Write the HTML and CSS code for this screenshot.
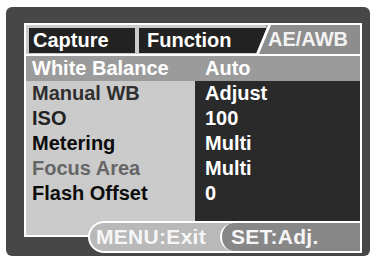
FILE: index.html
```html
<!DOCTYPE html>
<html>
<head>
<meta charset="utf-8">
<link rel="stylesheet" href="styles.css">
</head>
<body>
<div class="screen">
  <div class="panel">
    <div class="top">
      <div class="tabs">
        <div class="tab tab-capture">Capture</div>
        <div class="tab tab-function">Function</div>
        <div class="tab tab-active"><span class="tab-text">AE/AWB</span></div>
      </div>
      <div class="row-hl">
        <div class="hl-label">White Balance</div>
        <div class="hl-value">Auto</div>
      </div>
      <div class="grid">
        <div class="labels">
          <div class="item c-dim">Manual WB</div>
          <div class="item c-dark">ISO</div>
          <div class="item c-black">Metering</div>
          <div class="item c-gray">Focus Area</div>
          <div class="item c-black">Flash Offset</div>
        </div>
        <div class="values">
          <div class="item">Adjust</div>
          <div class="item">100</div>
          <div class="item">Multi</div>
          <div class="item">Multi</div>
          <div class="item">0</div>
        </div>
      </div>
    </div>
    <div class="foot">
      <div class="foot-left"></div>
      <div class="bar">
        <div class="menu">MENU:Exit</div>
        <div class="set">SET:Adj.</div>
      </div>
    </div>
  </div>
</div>
</body>
</html>
```
FILE: styles.css
```css
* { box-sizing: border-box; }
html, body { margin: 0; padding: 0; background: #ffffff; }
body {
  width: 376px;
  height: 262px;
  overflow: hidden;
  font-family: "Liberation Sans", Arial, sans-serif;
  font-weight: bold;
  font-size: 20px;
}
.screen {
  margin: 7px 0 0 6px;
  width: 364px;
  height: 249px;
  background: #474747;
  border-radius: 6px;
  padding: 16px 0 0 18px;
}
.panel { width: 338px; }
.top {
  border: 2px solid #fff;
  border-bottom: 0;
}
.tabs {
  display: flex;
  height: 31px;
  background: #cbcbcb;
  border-bottom: 2px solid #fff;
}
.tab {
  margin-top: 3px;
  height: 25px;
  display: flex;
  align-items: center;
  color: #fff;
  background: #222;
}
.tab-capture { margin-left: 3px; width: 106px; padding-left: 4px; }
.tab-function { margin-left: 4px; width: 127px; padding-left: 8px; }
.tab-active {
  flex: 1;
  margin-top: 0;
  height: 29px;
  background: #8d8d8d;
  color: #f2f2f2;
  position: relative;
  padding-left: 2px;
}
.tab-active::before {
  content: "";
  position: absolute;
  top: 0;
  bottom: 0;
  left: -4px;
  width: 16px;
  background: #8d8d8d;
  border-left: 3px solid #fff;
  transform: skewX(-22.5deg);
}
.tab-text { position: relative; }
.row-hl {
  display: flex;
  height: 25px;
  background: #9b9b9b;
  color: #fff;
  align-items: center;
}
.hl-label { width: 169px; padding-left: 6px; }
.hl-value { padding-left: 10px; }
.grid { display: flex; height: 140px; }
.labels { width: 169px; background: #cbcbcb; padding-left: 6px; }
.values { flex: 1; background: #2a2a2a; color: #fff; padding-left: 10px; }
.item { height: 25px; line-height: 25px; white-space: nowrap; }
.c-dim { color: #2f2f2f; }
.c-dark { color: #222; }
.c-black { color: #0c0c0c; }
.c-gray { color: #666; }
.foot { display: flex; align-items: flex-start; height: 32px; }
.foot-left {
  width: 80px;
  height: 16px;
  background: #cbcbcb;
  border-left: 2px solid #fff;
  border-bottom: 2px solid #fff;
}
.bar {
  margin-left: -16px;
  flex: 1;
  height: 32px;
  border: 2px solid #fff;
  border-radius: 16px 0 0 16px;
  background: #b9b9b9;
  display: flex;
  color: #f6f6f6;
  font-size: 21px;
  letter-spacing: 0.3px;
}
.menu { width: 130px; padding-left: 6px; line-height: 28px; }
.set {
  flex: 1;
  background: #878787;
  border-left: 2px solid #fff;
  border-radius: 14px 0 0 14px;
  padding-left: 9px;
  line-height: 28px;
}
```
